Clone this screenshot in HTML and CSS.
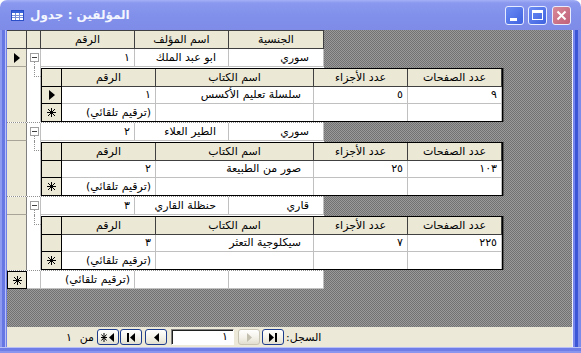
FILE: index.html
```html
<!DOCTYPE html>
<html lang="ar">
<head>
<meta charset="utf-8">
<title>المؤلفين : جدول</title>
<link rel="stylesheet" href="styles.css">
</head>
<body>
<div class="win">
  <div class="title">
    <svg class="ticon" width="13" height="11" viewBox="0 0 13 11"><rect x="0.5" y="0.5" width="12" height="10" fill="#fff" stroke="#2a4fc8"/><rect x="1" y="1" width="11" height="2" fill="#3a62d8"/><path d="M1 5.5h11M1 7.5h11M4.5 3v7M8.5 3v7" stroke="#7a90d8"/></svg>
    <span class="ttext">المؤلفين : جدول</span>
    <div class="tbtns">
      <span class="tb tmin"><i></i></span>
      <span class="tb tmax"><i></i></span>
      <span class="tb tclose"><svg width="11" height="11" viewBox="0 0 11 11"><path d="M1.5 1.5l8 8M9.5 1.5l-8 8" stroke="#fff" stroke-width="2"/></svg></span>
    </div>
  </div>
  <div class="frame">
    <div class="lb"></div>
    <div class="client">
      <div class="sheet">
        <div class="mrow mhead">
          <div class="hc"></div><div class="hc"></div>
          <div class="hc">الرقم</div><div class="hc">اسم المؤلف</div><div class="hc">الجنسية</div>
        </div>

        <div class="mrow">
          <div class="sel"><i class="arrow"></i></div>
          <div class="exp"><i class="minus"></i><i class="vline"></i></div>
          <div class="c num">١</div><div class="c txt">ابو عبد الملك</div><div class="c txt nat">سوري</div>
        </div>
        <div class="sub">
          <div class="sel"></div>
          <div class="exp"><i class="tree"></i></div>
          <div class="stable">
            <div class="srow shead"><div class="ssel"></div><div class="hc">الرقم</div><div class="hc">اسم الكتاب</div><div class="hc">عدد الأجزاء</div><div class="hc">عدد الصفحات</div></div>
            <div class="srow"><div class="ssel"><i class="arrow"></i></div><div class="c num">١</div><div class="c txt">سلسلة تعليم الأكسس</div><div class="c num">٥</div><div class="c num">٩</div></div>
            <div class="srow slast"><div class="ssel"><svg class="star" width="9" height="9" viewBox="0 0 9 9"><path d="M4.5 0v9M0 4.5h9M1 1l7 7M8 1l-7 7" stroke="#000"/></svg></div><div class="c num">(ترقيم تلقائي)</div><div class="c"></div><div class="c"></div><div class="c"></div></div>
          </div>
        </div>

        <div class="mrow">
          <div class="sel"></div>
          <div class="exp"><i class="minus"></i><i class="vline"></i></div>
          <div class="c num">٢</div><div class="c txt">الطير العلاء</div><div class="c txt nat">سوري</div>
        </div>
        <div class="sub">
          <div class="sel"></div>
          <div class="exp"><i class="tree"></i></div>
          <div class="stable">
            <div class="srow shead"><div class="ssel"></div><div class="hc">الرقم</div><div class="hc">اسم الكتاب</div><div class="hc">عدد الأجزاء</div><div class="hc">عدد الصفحات</div></div>
            <div class="srow"><div class="ssel"></div><div class="c num">٢</div><div class="c txt">صور من الطبيعة</div><div class="c num">٢٥</div><div class="c num">١٠٣</div></div>
            <div class="srow slast"><div class="ssel"><svg class="star" width="9" height="9" viewBox="0 0 9 9"><path d="M4.5 0v9M0 4.5h9M1 1l7 7M8 1l-7 7" stroke="#000"/></svg></div><div class="c num">(ترقيم تلقائي)</div><div class="c"></div><div class="c"></div><div class="c"></div></div>
          </div>
        </div>

        <div class="mrow">
          <div class="sel"></div>
          <div class="exp"><i class="minus"></i><i class="vline"></i></div>
          <div class="c num">٣</div><div class="c txt">حنظلة القاري</div><div class="c txt nat">قاري</div>
        </div>
        <div class="sub">
          <div class="sel"></div>
          <div class="exp"><i class="tree"></i></div>
          <div class="stable">
            <div class="srow shead"><div class="ssel"></div><div class="hc">الرقم</div><div class="hc">اسم الكتاب</div><div class="hc">عدد الأجزاء</div><div class="hc">عدد الصفحات</div></div>
            <div class="srow"><div class="ssel"></div><div class="c num">٣</div><div class="c txt">سيكلوجية التعثر</div><div class="c num">٧</div><div class="c num">٢٢٥</div></div>
            <div class="srow slast"><div class="ssel"><svg class="star" width="9" height="9" viewBox="0 0 9 9"><path d="M4.5 0v9M0 4.5h9M1 1l7 7M8 1l-7 7" stroke="#000"/></svg></div><div class="c num">(ترقيم تلقائي)</div><div class="c"></div><div class="c"></div><div class="c"></div></div>
          </div>
        </div>

        <div class="mrow mnew">
          <div class="sel newsel"><svg class="star" width="9" height="9" viewBox="0 0 9 9"><path d="M4.5 0v9M0 4.5h9M1 1l7 7M8 1l-7 7" stroke="#000"/></svg></div>
          <div class="exp"></div>
          <div class="c num">(ترقيم تلقائي)</div><div class="c"></div><div class="c"></div>
        </div>
      </div>

      <div class="nav">
        <span class="ncount">١</span>
        <span class="nof">من</span>
        <span class="nb nb1"><svg width="14" height="9" viewBox="0 0 14 9"><path d="M3 0v9M0 4.5h6M0.5 1.5l5 6M5.5 1.5l-5 6" stroke="#000"/><path d="M13 0v9L8 4.5z" fill="#000"/></svg></span>
        <span class="nb nb2"><svg width="8" height="9" viewBox="0 0 8 9"><rect x="0" y="0" width="2" height="9" fill="#000"/><path d="M8 0v9L3 4.5z" fill="#000"/></svg></span>
        <span class="nb nb3"><svg width="5" height="9" viewBox="0 0 5 9"><path d="M5 0v9L0 4.5z" fill="#000"/></svg></span>
        <span class="rec">١</span>
        <span class="nb nb4 dis"><svg width="5" height="9" viewBox="0 0 5 9"><path d="M0 0v9L5 4.5z" fill="#c4c0b0"/></svg></span>
        <span class="nb nb5"><svg width="8" height="9" viewBox="0 0 8 9"><path d="M0 0v9L5 4.5z" fill="#000"/><rect x="6" y="0" width="2" height="9" fill="#000"/></svg></span>
        <span class="nlabel" dir="rtl">السجل:</span>
      </div>
    </div>
    <div class="rb"></div>
  </div>
  <div class="bottom"></div>
</div>
</body>
</html>
```

FILE: styles.css
```css
html, body {
  margin: 0;
  padding: 0;
  background: #fff;
}
body {
  width: 581px;
  height: 353px;
  overflow: hidden;
  font-family: "DejaVu Sans", sans-serif;
  font-size: 11px;
  color: #000;
}
.win {
  width: 581px;
  height: 353px;
  display: flex;
  flex-direction: column;
}
.title {
  height: 30px;
  flex: none;
  display: flex;
  align-items: center;
  padding-left: 11px;
  border-radius: 7px 7px 0 0;
  background: linear-gradient(#a4b0f6 0, #8a98ee 3px, #8190ea 50%, #7e8ce8 100%);
}
.ticon {
  flex: none;
  margin-right: 6px;
}
.ttext {
  flex: 1;
  color: #f4f6ff;
  font-weight: bold;
  font-size: 12px;
  line-height: 30px;
  white-space: nowrap;
}
.tbtns {
  display: flex;
  gap: 4px;
  margin-right: 10px;
}
.tb {
  width: 19px;
  height: 19px;
  box-sizing: border-box;
  border: 1px solid #e8ecff;
  border-radius: 3px;
  display: flex;
  align-items: center;
  justify-content: center;
  background: linear-gradient(135deg, #6b8cf4, #3f62e0);
}
.tmin {
  align-items: flex-end;
  justify-content: flex-start;
}
.tmin i {
  display: block;
  width: 7px;
  height: 3px;
  background: #fff;
  margin: 0 0 3px 4px;
}
.tmax i {
  display: block;
  width: 11px;
  height: 10px;
  box-sizing: border-box;
  border: 1px solid #fff;
  border-top-width: 3px;
}
.tclose {
  margin-left: 1px;
  background: linear-gradient(135deg, #d88a98, #c0607a);
}
.frame {
  flex: 1;
  display: flex;
  min-height: 0;
}
.lb {
  width: 7px;
  flex: none;
  background: linear-gradient(to right, #8e9af0 0 2px, #6676e2 2px 5px, #b8c0f6 5px 6px, #7080e6 6px);
}
.rb {
  width: 9px;
  flex: none;
  background: linear-gradient(to right, #f0f2ff 0 1px, #7886ea 1px 3px, #3c56d8 3px 6px, #7c8aea 6px);
}
.bottom {
  height: 6px;
  flex: none;
  background: linear-gradient(#b8c0f6 0 1px, #6e7ee6 1px 4px, #8a96ee 4px);
}
.client {
  width: 565px;
  flex: none;
  display: flex;
  flex-direction: column;
}
.sheet {
  flex: 1;
  min-height: 0;
  overflow: hidden;
  background: repeating-conic-gradient(#727272 0 25%, #9a9a9a 0 50%) 0 0 / 2px 2px;
}

/* main datasheet */
.mrow {
  display: grid;
  grid-template-columns: 20px 14px 94px 94px 95px;
  width: 317px;
  height: 18px;
}
.mhead {
  height: 19px;
  border-top: 1px solid #404040;
  box-sizing: border-box;
}
.hc {
  background: #ebe8d6;
  border-right: 1px solid #404040;
  border-bottom: 1px solid #404040;
  box-sizing: border-box;
  text-align: center;
  line-height: 17px;
  white-space: nowrap;
  overflow: hidden;
}
.c {
  background: #fff;
  border-right: 1px solid #c0c0c0;
  border-bottom: 1px solid #c0c0c0;
  box-sizing: border-box;
  line-height: 17px;
  white-space: nowrap;
  overflow: hidden;
}
.num {
  text-align: right;
  padding-right: 4px;
}
.txt {
  text-align: right;
  padding-right: 12px;
}
.nat {
  padding-right: 14px;
}
.sel {
  background: #ebe8d6;
  border-right: 1px solid #808080;
  border-bottom: 1px solid #a8a598;
  box-sizing: border-box;
  display: flex;
  align-items: center;
  justify-content: center;
}
.newsel {
  border: 1px solid #000;
}
.arrow {
  display: block;
  width: 0;
  height: 0;
  border-left: 6px solid #000;
  border-top: 5px solid transparent;
  border-bottom: 5px solid transparent;
}
.exp {
  background: #fff;
  border-right: 1px solid #c0c0c0;
  box-sizing: border-box;
  display: flex;
  flex-direction: column;
}
.mnew .exp {
  border-bottom: 1px solid #c0c0c0;
}
.minus {
  display: flex;
  align-items: center;
  justify-content: center;
  width: 9px;
  height: 9px;
  box-sizing: border-box;
  margin: 4px 0 0 3px;
  border: 1px solid #a0a0a0;
  background: #fff;
}
.minus::after {
  content: "";
  width: 5px;
  height: 1px;
  background: #404040;
}
.vline {
  display: block;
  flex: 1;
  margin-left: 7px;
  border-left: 1px dotted #909090;
}
.tree {
  display: block;
  width: 6px;
  height: 9px;
  margin-left: 7px;
  border-left: 1px dotted #909090;
  border-bottom: 1px dotted #909090;
}

/* sub datasheets */
.sub {
  display: grid;
  grid-template-columns: 20px 14px minmax(0, 1fr);
  width: 317px;
  height: 56px;
  box-sizing: border-box;
  border-bottom: 1px dotted #909090;
  background: #fff;
}
.sub .sel {
  border-bottom: none;
}
.stable {
  width: 462px;
  height: 54px;
  margin-top: 1px;
  box-sizing: border-box;
  border: 1px solid #000;
  box-shadow: 1px 0 0 #505050;
  background: #fff;
}
.srow {
  display: grid;
  grid-template-columns: 20px 94px 158px 94px 94px;
  height: 17px;
}
.shead {
  height: 18px;
}
.shead .hc {
  line-height: 17px;
}
.srow .c {
  line-height: 16px;
}
.slast .c {
  border-bottom: none;
  line-height: 17px;
}
.ssel {
  background: #ebe8d6;
  border-right: 1px solid #000;
  border-bottom: 1px solid #000;
  box-sizing: border-box;
  display: flex;
  align-items: center;
  justify-content: center;
}
.slast .ssel {
  border-bottom: none;
}
.star {
  display: block;
}

/* navigation bar */
.nav {
  height: 20px;
  flex: none;
  display: flex;
  align-items: center;
  background: #ece9d8;
  padding-left: 58px;
  box-sizing: border-box;
}
.ncount {
  width: 14px;
  padding-left: 1px;
  box-sizing: border-box;
}
.nof {
  width: 17px;
  text-align: right;
  padding-right: 2px;
  box-sizing: border-box;
}
.nb {
  width: 22px;
  height: 16px;
  box-sizing: border-box;
  border: 1px solid #1e3c8c;
  border-radius: 3px;
  background: linear-gradient(#ffffff, #f2f0e6 60%, #e2dfd0);
  display: flex;
  align-items: center;
  justify-content: center;
}
.nb svg {
  display: block;
}
.nb1 { margin-left: 1px; }
.nb2 { margin-left: 1px; }
.nb3 { margin-left: 3px; }
.nb4 { margin-left: 4px; }
.nb5 { margin-left: 2px; }
.dis {
  border-color: #c8c4b4;
}
.rec {
  width: 63px;
  height: 16px;
  margin-left: 4px;
  box-sizing: border-box;
  background: #fff;
  border-top: 1px solid #808080;
  border-left: 1px solid #808080;
  border-right: 1px solid #fff;
  border-bottom: 1px solid #fff;
  box-shadow: inset 1px 1px 0 #202020;
  text-align: right;
  padding-right: 5px;
  line-height: 14px;
}
.nlabel {
  margin-left: 2px;
  white-space: nowrap;
}
```
